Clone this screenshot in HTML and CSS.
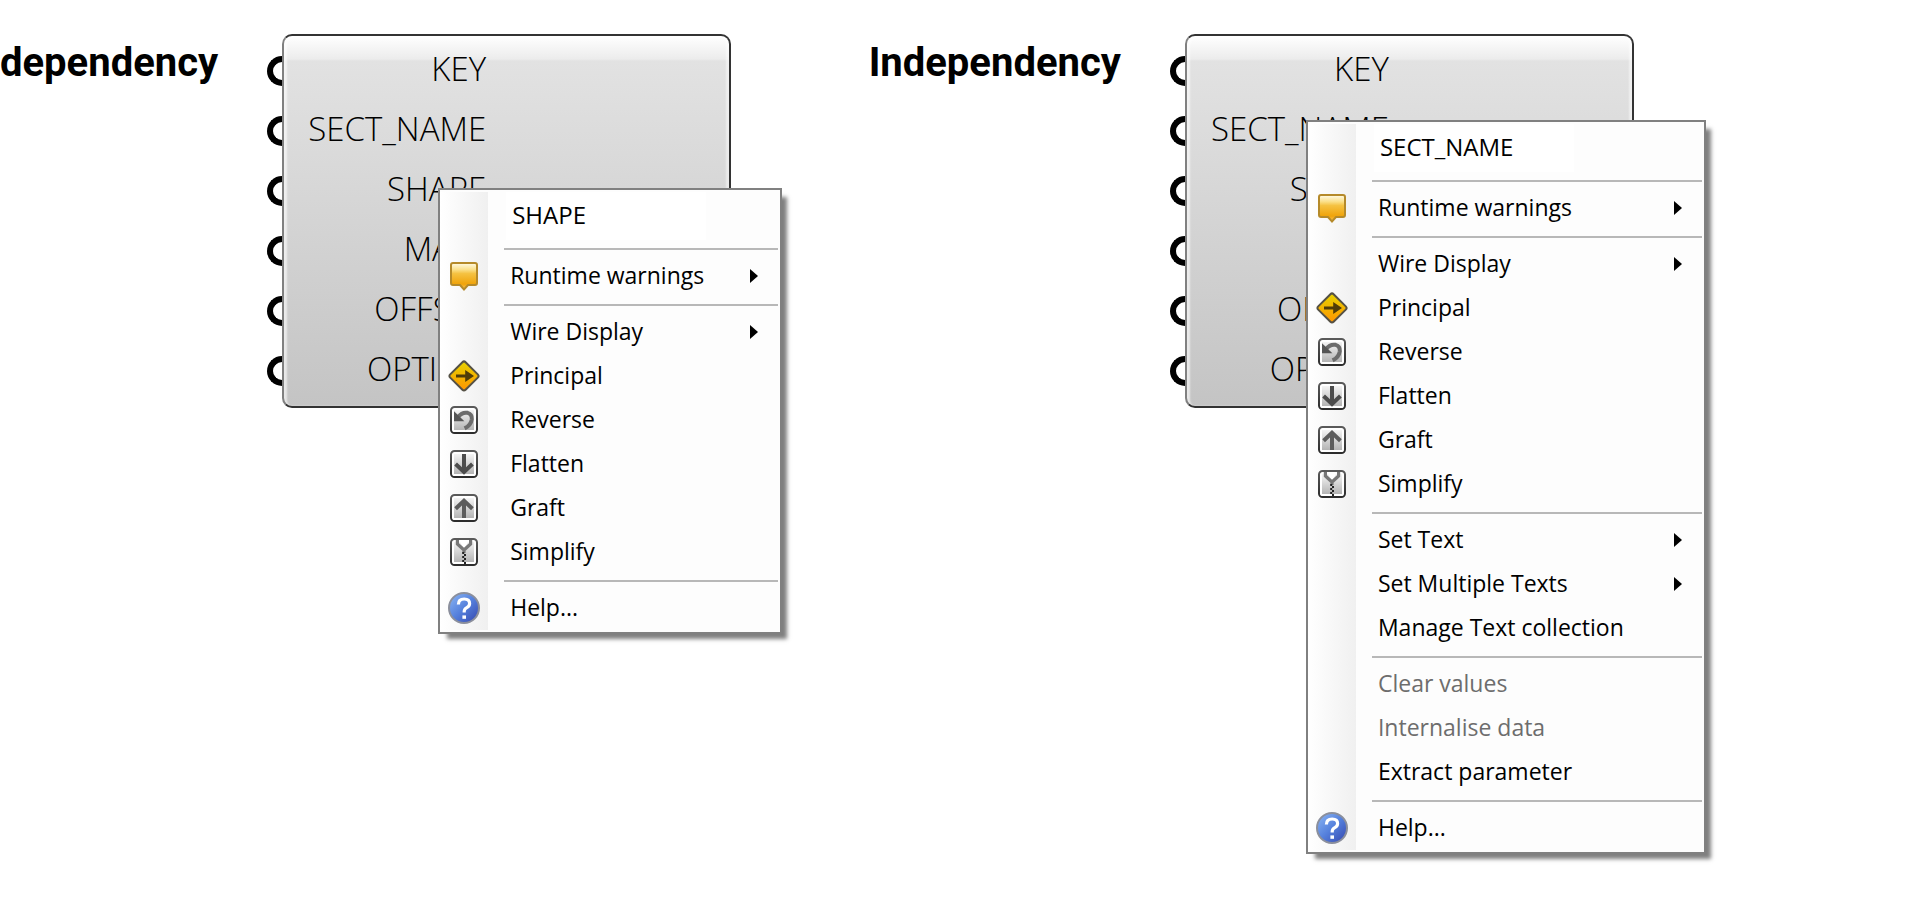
FILE: index.html
```
<!DOCTYPE html>
<html lang="en">
    <head>
        <title>Dependency / Independency</title>
        <meta charset="utf-8">
        <meta name="viewport" content="width=device-width, initial-scale=1">
        <link rel="stylesheet" href="styles.css">
    </head>
    <body>
        <!-- Shared icons, drawn on a 16x16 grid -->
        <svg class="defs" width="0" height="0" aria-hidden="true">
            <defs>
                <linearGradient id="g-warn" x1="0" y1="0" x2="0" y2="1">
                    <stop offset="0" stop-color="#fffbe8"/>
                    <stop offset="0.25" stop-color="#fbe08a"/>
                    <stop offset="0.4" stop-color="#f5c242"/>
                    <stop offset="0.8" stop-color="#f0a30a"/>
                    <stop offset="1" stop-color="#f9c458"/>
                </linearGradient>
                <linearGradient id="g-sign" x1="0" y1="0" x2="0" y2="1">
                    <stop offset="0" stop-color="#e6d200"/>
                    <stop offset="1" stop-color="#ff9500"/>
                </linearGradient>
                <linearGradient id="g-box" x1="0" y1="0" x2="0" y2="1">
                    <stop offset="0" stop-color="#f4f4f4"/>
                    <stop offset="1" stop-color="#b4b4b4"/>
                </linearGradient>
                <linearGradient id="g-edge" x1="0" y1="0" x2="0" y2="1">
                    <stop offset="0" stop-color="#5a5a5a"/>
                    <stop offset="1" stop-color="#2c2c2c"/>
                </linearGradient>
                <linearGradient id="g-help" x1="0" y1="0" x2="1" y2="1">
                    <stop offset="0" stop-color="#8db8f5"/>
                    <stop offset="0.5" stop-color="#5580dc"/>
                    <stop offset="1" stop-color="#3344ac"/>
                </linearGradient>
                <symbol id="i-warn" viewBox="0 0 16 16">
                    <path d="M2.5 1.5h11q1 0 1 1v9q0 1-1 1h-3.500l-2 2.200-2-2.200h-3.500q-1 0-1-1v-9q0-1 1-1z" fill="url(#g-warn)" stroke="#b58a2a"/>
                </symbol>
                <symbol id="i-principal" viewBox="0 0 16 16">
                    <path d="M7.200 1.100q.8-.8 1.600 0l6.100 6.100q.8.8 0 1.600l-6.100 6.100q-.8.8-1.600 0l-6.100-6.100q-.8-.8 0-1.600z" fill="url(#g-sign)" stroke="#555145"/>
                    <path d="M4 7.200h4.600v-2.200l4.400 3-4.400 3v-2.200h-4.600z" fill="#4f3c08"/>
                </symbol>
                <symbol id="i-box" viewBox="0 0 16 16">
                    <rect x="1.500" y="1.500" width="13" height="13" rx="1.800" fill="#fff" stroke="url(#g-edge)"/>
                    <rect x="3" y="3" width="10" height="10" fill="url(#g-box)"/>
                </symbol>
                <symbol id="i-reverse" viewBox="0 0 16 16">
                    <use href="#i-box"/>
                    <path d="M5 6.500q2-2.600 4.800-2.100 2.300.7 2.100 3.200-.4 3-3.600 4.600" fill="none" stroke="#6c6c6c" stroke-width="2"/>
                    <path d="M3 3.600v5h5.200z" fill="#555"/>
                </symbol>
                <symbol id="i-flatten" viewBox="0 0 16 16">
                    <use href="#i-box"/>
                    <path d="M8 3v9M3.800 8 8 12l4.200-4" fill="none" stroke="#4c4c4c" stroke-width="2"/>
                </symbol>
                <symbol id="i-graft" viewBox="0 0 16 16">
                    <use href="#i-box"/>
                    <path d="M8 13V4.500M3.800 8.400 8 4.400l4.200 4" fill="none" stroke="#5c5c5c" stroke-width="2"/>
                </symbol>
                <symbol id="i-simplify" viewBox="0 0 16 16">
                    <use href="#i-box"/>
                    <path d="M5.500 2h5L8 6.500z" fill="#fff"/>
                    <path d="M4.700 2v2L8 7l3.300-3V2M8 6.500v2" fill="none" stroke="#777" stroke-width="1.600"/>
                    <path d="M7.600 8v6" stroke="#222" stroke-dasharray="1 1"/>
                    <path d="M8.500 9v5" stroke="#222" stroke-dasharray="1 1"/>
                </symbol>
                <symbol id="i-help" viewBox="0 0 16 16">
                    <circle cx="8" cy="8" r="7.500" fill="url(#g-help)" stroke="#8b8f9c"/>
                    <path d="M5.200 6.200q0-2.700 2.900-2.700 2.700 0 2.700 2.300 0 1.300-1.400 2-1.300.7-1.300 1.900v.5" fill="none" stroke="#fff" stroke-width="1.600"/>
                    <rect x="7.200" y="11.700" width="1.800" height="1.700" fill="#fff"/>
                </symbol>
                <symbol id="i-arrow" viewBox="0 0 8 14">
                    <path d="M0 0 8 7 0 14z"/>
                </symbol>
            </defs>
        </svg>

        <main class="compare">
            <section class="panel">
                <h2>dependency</h2>
                <div class="node">
                    <ul class="params">
                        <li>KEY</li>
                        <li>SECT_NAME</li>
                        <li>SHAPE</li>
                        <li>MATL</li>
                        <li>OFFSET</li>
                        <li>OPTION</li>
                    </ul>
                    <div class="menu menu-shape">
                        <input class="name" type="text" value="SHAPE" aria-label="Parameter name">
                        <hr>
                        <button><svg class="icon"><use href="#i-warn"/></svg><span>Runtime warnings</span><svg class="arrow"><use href="#i-arrow"/></svg></button>
                        <hr>
                        <button><span>Wire Display</span><svg class="arrow"><use href="#i-arrow"/></svg></button>
                        <button><svg class="icon"><use href="#i-principal"/></svg><span>Principal</span></button>
                        <button><svg class="icon"><use href="#i-reverse"/></svg><span>Reverse</span></button>
                        <button><svg class="icon"><use href="#i-flatten"/></svg><span>Flatten</span></button>
                        <button><svg class="icon"><use href="#i-graft"/></svg><span>Graft</span></button>
                        <button><svg class="icon"><use href="#i-simplify"/></svg><span>Simplify</span></button>
                        <hr>
                        <button><svg class="icon"><use href="#i-help"/></svg><span>Help...</span></button>
                    </div>
                </div>
            </section>

            <section class="panel">
                <h2>Independency</h2>
                <div class="node">
                    <ul class="params">
                        <li>KEY</li>
                        <li>SECT_NAME</li>
                        <li>SHAPE</li>
                        <li>MATL</li>
                        <li>OFFSET</li>
                        <li>OPTION</li>
                    </ul>
                    <div class="menu menu-sect">
                        <input class="name" type="text" value="SECT_NAME" aria-label="Parameter name">
                        <hr>
                        <button><svg class="icon"><use href="#i-warn"/></svg><span>Runtime warnings</span><svg class="arrow"><use href="#i-arrow"/></svg></button>
                        <hr>
                        <button><span>Wire Display</span><svg class="arrow"><use href="#i-arrow"/></svg></button>
                        <button><svg class="icon"><use href="#i-principal"/></svg><span>Principal</span></button>
                        <button><svg class="icon"><use href="#i-reverse"/></svg><span>Reverse</span></button>
                        <button><svg class="icon"><use href="#i-flatten"/></svg><span>Flatten</span></button>
                        <button><svg class="icon"><use href="#i-graft"/></svg><span>Graft</span></button>
                        <button><svg class="icon"><use href="#i-simplify"/></svg><span>Simplify</span></button>
                        <hr>
                        <button><span>Set Text</span><svg class="arrow"><use href="#i-arrow"/></svg></button>
                        <button><span>Set Multiple Texts</span><svg class="arrow"><use href="#i-arrow"/></svg></button>
                        <button><span>Manage Text collection</span></button>
                        <hr>
                        <button disabled><span>Clear values</span></button>
                        <button disabled><span>Internalise data</span></button>
                        <button><span>Extract parameter</span></button>
                        <hr>
                        <button><svg class="icon"><use href="#i-help"/></svg><span>Help...</span></button>
                    </div>
                </div>
            </section>
        </main>
    </body>
</html>
```
FILE: styles.css
```
*, *::before {
  box-sizing: border-box;
}

body {
  margin: 0;
  background: #fff;
  color: #000;
  font-family: "Open Sans", "Noto Sans", sans-serif;
}

.defs {
  position: absolute;
}

.compare {
  display: grid;
  grid-template-columns: 451fr 549fr;
  min-height: 100vh;
  padding-top: 34px;
}

.panel {
  display: flex;
  align-items: flex-start;
  gap: 64px;
}

h2 {
  margin: 5px 0 0 0;
  font-family: Roboto, sans-serif;
  font-size: 40px;
  line-height: 48px;
  font-weight: bold;
}

/* The component, with its inputs on the left */
.node {
  position: relative;
  width: 449px;
  padding: 3px 0 7px 0;
  border: 2px solid #333;
  border-left-color: #808080;
  border-radius: 10px;
  background: linear-gradient(#fff 0, #ececec 23px, #e2e2e2 25px, #c4c4c4 100%);
  box-shadow: inset 3px 2px 2px rgba(255, 255, 255, 0.6), inset -3px 0 2px rgba(255, 255, 255, 0.5);
}

.params {
  margin: 0;
  padding: 0;
  width: 202px;
  list-style: none;
  font-size: 33px;
  font-weight: 300;
  line-height: 60px;
  text-align: right;
}

.params li {
  position: relative;
  height: 60px;
}

/* half circle grip on the left edge */
.params li::before {
  content: "";
  position: absolute;
  left: -17px;
  top: 17px;
  width: 15px;
  height: 30px;
  border: 6px solid #000;
  border-right: 0;
  border-radius: 15px 0 0 15px;
  background: #fff;
}

.menu {
  position: absolute;
  z-index: 1;
  display: flex;
  flex-direction: column;
  padding: 2px 0;
  border: 2px solid #808080;
  background: linear-gradient(to right, #fff, #f0f0f0) 0 2px / 48px calc(100% - 4px) no-repeat #fdfdfd;
  box-shadow: 7px 7px 4px -2px rgba(0, 0, 0, 0.5);
}

.menu-shape {
  left: 154px;
  top: 152px;
  width: 344px;
}

.menu-sect {
  left: 119px;
  top: 84px;
  width: 400px;
}

.menu .name {
  width: 200px;
  height: 48px;
  margin: 0 0 2px 66px;
  padding: 0 0 4px 6px;
  border: 0;
  background: #fff;
  color: #000;
  font-family: inherit;
  font-size: 24px;
}

.menu hr {
  margin: 6px 2px 4px 64px;
  border: 0;
  height: 2px;
  width: auto;
  background: #b8b8b8;
}

.menu button {
  display: grid;
  grid-template-columns: 48px 1fr 8px;
  column-gap: 22px;
  align-items: center;
  height: 44px;
  padding: 0 22px 0 0;
  border: 0;
  background: none;
  color: #000;
  font-family: inherit;
  font-size: 23px;
  line-height: 32px;
  text-align: left;
}

.menu button:disabled {
  color: #6d6d6d;
}

.menu span {
  grid-column: 2;
  grid-row: 1;
  padding-bottom: 2px;
  white-space: nowrap;
}

.icon {
  grid-column: 1;
  grid-row: 1;
  justify-self: center;
  width: 32px;
  height: 32px;
}

.arrow {
  grid-column: 3;
  grid-row: 1;
  width: 8px;
  height: 14px;
}
```
